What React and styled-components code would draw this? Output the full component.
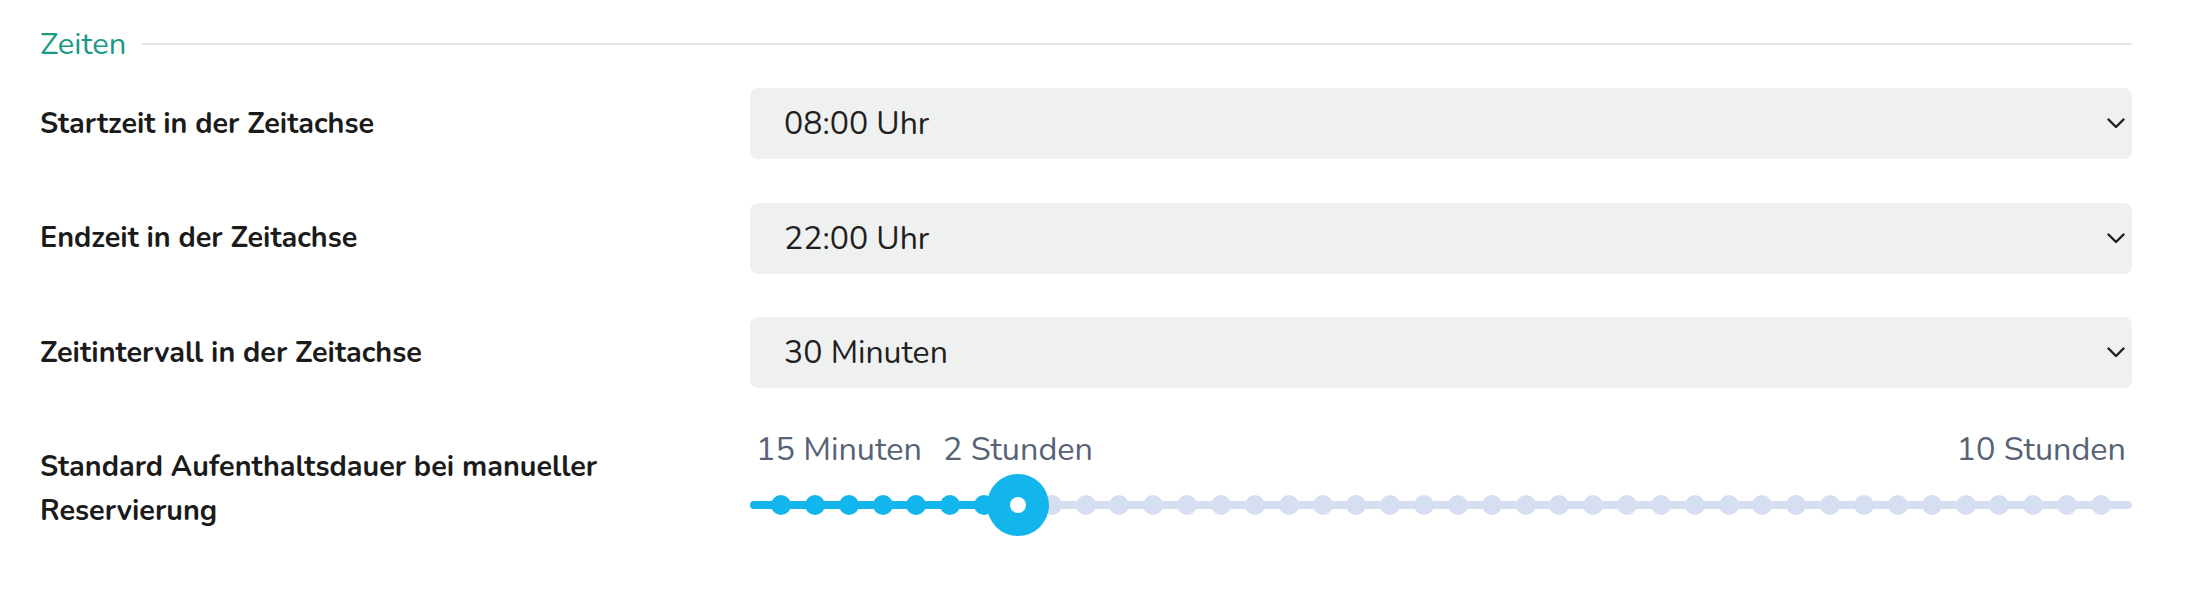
import React from "react";
import styled, { createGlobalStyle } from "styled-components";

const GlobalStyle = createGlobalStyle`
  html, body {
    margin: 0;
    padding: 0;
    background: #ffffff;
  }
  body {
    font-family: "Nunito", "Lato", "Noto Sans", sans-serif;
    color: #1b1b1b;
  }
`;

const FONT = `"Nunito", "Lato", "Noto Sans", sans-serif`;
const CYAN = "#13b6ec";
const RAIL = "#d6dff1";

const Page = styled.main`
  padding: 24px 56px 40px 40px;
`;

const SectionHeader = styled.div`
  display: flex;
  align-items: center;
  gap: 16px;
  height: 40px;
  margin-bottom: 24px;
`;

const SectionTitle = styled.h2`
  margin: 0;
  font-family: ${FONT};
  font-weight: 400;
  font-size: 31px;
  line-height: 40px;
  color: #1a9a85;
  white-space: nowrap;
`;

const Rule = styled.div`
  flex: 1;
  height: 2px;
  background: #e3e4e4;
`;

const Form = styled.div`
  display: grid;
  grid-template-columns: 680px 1fr;
  column-gap: 30px;
  row-gap: 43.5px;
`;

const FieldLabel = styled.label`
  font-family: ${FONT};
  font-weight: 700;
  font-size: 28.8px;
  line-height: 44px;
  color: #1b1b1b;
  align-self: ${(p) => (p.$top ? "start" : "center")};
  padding-top: ${(p) => (p.$top ? "13px" : "0")};
`;

const SelectShell = styled.div`
  display: flex;
  align-items: center;
  height: 71px;
  padding: 0 7px 0 34px;
  background: #eff0f0;
  border-radius: 8px;
`;

const NativeSelect = styled.select`
  flex: 1;
  appearance: none;
  -webkit-appearance: none;
  border: none;
  outline: none;
  background: transparent;
  padding: 0;
  margin: 0;
  height: 100%;
  font-family: ${FONT};
  font-size: 32px;
  font-weight: 400;
  color: #1f1f1f;
`;

const Chevron = () => (
  <svg width="18" height="11" viewBox="0 0 18 11" aria-hidden="true">
    <polyline
      points="1.5,1.5 9,9 16.5,1.5"
      fill="none"
      stroke="#1f1f1f"
      strokeWidth="2.4"
      strokeLinecap="round"
      strokeLinejoin="round"
    />
  </svg>
);

const SelectField = ({ id, value, options }) => (
  <SelectShell>
    <NativeSelect id={id} defaultValue={value}>
      {options.map((o) => (
        <option key={o} value={o}>
          {o}
        </option>
      ))}
    </NativeSelect>
    <Chevron />
  </SelectShell>
);

/* ---------- duration slider ---------- */

const Slider = styled.div`
  display: flex;
  flex-direction: column;
  gap: 7px;
`;

const ValueLabels = styled.div`
  position: relative;
  display: flex;
  justify-content: space-between;
  height: 34px;
  padding: 0 6px 0 6px;
  font-family: ${FONT};
  font-size: 32.4px;
  line-height: 34px;
  color: #576276;
  white-space: nowrap;
`;

const CurrentValue = styled.span`
  position: absolute;
  top: 0;
  transform: translateX(-50%);
`;

const Track = styled.div`
  position: relative;
  height: 64px;
  display: flex;
  align-items: center;
`;

const Rail = styled.div`
  position: relative;
  flex: 1;
  height: 8px;
  border-radius: 4px;
  background: ${RAIL};
`;

const RailFill = styled.div`
  height: 100%;
  border-radius: 4px;
  background: ${CYAN};
`;

const Ticks = styled.div`
  position: absolute;
  inset: 0;
  display: flex;
  align-items: center;
  justify-content: space-between;
  padding: 0 21px;
  pointer-events: none;
`;

const Tick = styled.span`
  width: 20px;
  height: 20px;
  border-radius: 50%;
  background: ${(p) => (p.$active ? CYAN : RAIL)};
`;

const Thumb = styled.div`
  position: absolute;
  top: 1px;
  width: 62px;
  height: 62px;
  border-radius: 50%;
  background: ${CYAN};
  display: flex;
  align-items: center;
  justify-content: center;

  &::after {
    content: "";
    width: 16px;
    height: 16px;
    border-radius: 50%;
    background: #ffffff;
  }
`;

const THUMB = 62;

const DurationSlider = ({ steps, index, minLabel, maxLabel, valueLabel }) => {
  const ratio = index / (steps - 1);
  const center = `calc(${THUMB / 2}px + (100% - ${THUMB}px) * ${ratio})`;
  return (
    <Slider>
      <ValueLabels>
        <span>{minLabel}</span>
        <CurrentValue style={{ left: center }}>{valueLabel}</CurrentValue>
        <span>{maxLabel}</span>
      </ValueLabels>
      <Track>
        <Rail>
          <RailFill style={{ width: center }} />
        </Rail>
        <Ticks>
          {Array.from({ length: steps }, (_, i) => (
            <Tick key={i} $active={i <= index} />
          ))}
        </Ticks>
        <Thumb
          style={{ left: `calc((100% - ${THUMB}px) * ${ratio})` }}
          role="slider"
          aria-valuenow={index}
        />
      </Track>
    </Slider>
  );
};

const hours = Array.from({ length: 24 }, (_, h) => `${String(h).padStart(2, "0")}:00 Uhr`);
const intervals = ["15 Minuten", "30 Minuten", "60 Minuten"];

export default function App() {
  return (
    <>
      <GlobalStyle />
      <Page>
        <SectionHeader>
          <SectionTitle>Zeiten</SectionTitle>
          <Rule />
        </SectionHeader>
        <Form>
          <FieldLabel htmlFor="start">Startzeit in der Zeitachse</FieldLabel>
          <SelectField id="start" value="08:00 Uhr" options={hours} />

          <FieldLabel htmlFor="end">Endzeit in der Zeitachse</FieldLabel>
          <SelectField id="end" value="22:00 Uhr" options={hours} />

          <FieldLabel htmlFor="interval">Zeitintervall in der Zeitachse</FieldLabel>
          <SelectField id="interval" value="30 Minuten" options={intervals} />

          <FieldLabel $top>Standard Aufenthaltsdauer bei manueller Reservierung</FieldLabel>
          <DurationSlider
            steps={40}
            index={7}
            minLabel="15 Minuten"
            maxLabel="10 Stunden"
            valueLabel="2 Stunden"
          />
        </Form>
      </Page>
    </>
  );
}
